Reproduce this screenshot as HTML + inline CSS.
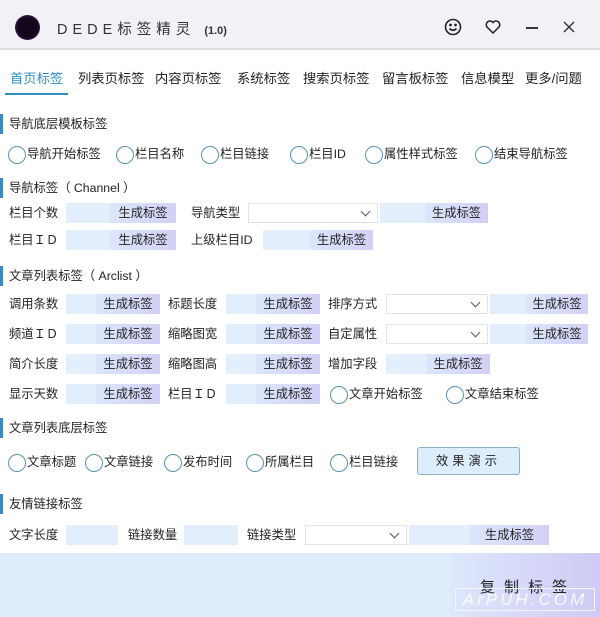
<!DOCTYPE html>
<html><head><meta charset="utf-8"><style>
*{margin:0;padding:0;box-sizing:border-box}
body{width:600px;height:617px;position:relative;background:#fff;overflow:hidden;font-family:"Liberation Sans","Noto Sans CJK SC",sans-serif;font-size:12.3px;color:#222}
.a{position:absolute;white-space:nowrap}
.t{height:20px;line-height:20px;transform:translateY(-10px)}
.box{position:absolute;height:20px;background:#e3effc;transform:translateY(-10px)}
.btn{position:absolute;top:0;right:0;height:20px;line-height:20px;text-align:center;background:linear-gradient(90deg,#dbe6fb,#d2d0f6);color:#222}
.sel{position:absolute;height:20px;background:#fff;border:1px solid #e2e2e8;transform:translateY(-10px)}
.sel:after{content:"";position:absolute;right:8px;top:4px;width:6px;height:6px;border-right:1.3px solid #555;border-bottom:1.3px solid #555;transform:rotate(45deg)}
.r{position:absolute;height:20px;line-height:20px;transform:translateY(-10px);padding-left:19px;white-space:nowrap}
.r:before{content:"";position:absolute;left:0;top:2px;width:16px;height:16px;border:1.6px solid #5a93ad;border-radius:50%}
.sec{position:absolute;left:0;width:3px;height:20px;background:#3c8ab8;transform:translateY(-10px)}
.tab{position:absolute;top:68px;font-size:13.3px;white-space:nowrap}
</style></head><body>
<div class="a" style="left:0;top:0;width:600px;height:50px;background:#f1f1f6;border-bottom:2px solid #dcdce2"></div>
<div class="a" style="left:15px;top:15px;width:25px;height:25px;border-radius:50%;background:radial-gradient(circle,#12081c 55%,#3a1a4c 75%,#c8a8e0 100%)"></div>
<div class="a" style="left:57px;top:18px;font-size:14.5px;letter-spacing:5px;color:#333">DEDE标签精灵 <span style="font-size:11px;letter-spacing:0;font-weight:bold">(1.0)</span></div>
<svg class="a" style="left:444px;top:18px" width="18" height="18" viewBox="0 0 18 18" fill="none" stroke="#222" stroke-width="1.6"><circle cx="9" cy="9" r="7.5"/><circle cx="6.5" cy="7" r=".6" fill="#222"/><circle cx="11.5" cy="7" r=".6" fill="#222"/><path d="M5.5 10.5q3.5 3.5 7 0"/></svg>
<svg class="a" style="left:485px;top:20px" width="16" height="14" viewBox="0 0 16 14" fill="none" stroke="#222" stroke-width="1.5"><path d="M8 13L2 7A3.3 3.3 0 0 1 8 2.5A3.3 3.3 0 0 1 14 7Z"/></svg>
<div class="a" style="left:526px;top:27px;width:12px;height:1.5px;background:#333"></div>
<svg class="a" style="left:563px;top:21px" width="12" height="12" viewBox="0 0 12 12" stroke="#333" stroke-width="1.4"><path d="M1 1L11 11M11 1L1 11"/></svg>

<div class="tab" style="left:10px;color:#2d8ec9">首页标签</div>
<div class="a" style="left:5px;top:93px;width:63px;height:2px;background:#2d8ec9"></div>
<div class="tab" style="left:78px">列表页标签</div>
<div class="tab" style="left:155px">内容页标签</div>
<div class="tab" style="left:237px">系统标签</div>
<div class="tab" style="left:303px">搜索页标签</div>
<div class="tab" style="left:382px">留言板标签</div>
<div class="tab" style="left:461px">信息模型</div>
<div class="tab" style="left:525px">更多/问题</div>

<div class="sec" style="top:124px"></div><div class="a t" style="left:9px;top:124px">导航底层模板标签</div>
<div class="r" style="left:8px;top:154px">导航开始标签</div>
<div class="r" style="left:116px;top:154px">栏目名称</div>
<div class="r" style="left:201px;top:154px">栏目链接</div>
<div class="r" style="left:290px;top:154px">栏目ID</div>
<div class="r" style="left:365px;top:154px">属性样式标签</div>
<div class="r" style="left:475px;top:154px">结束导航标签</div>

<div class="sec" style="top:188px"></div><div class="a t" style="left:9px;top:188px">导航标签（ Channel ）</div>
<div class="a t" style="left:9px;top:213px">栏目个数</div>
<div class="box" style="left:66px;top:213px;width:110px"><div class="btn" style="width:66px">生成标签</div></div>
<div class="a t" style="left:191px;top:213px">导航类型</div>
<div class="sel" style="left:248px;top:213px;width:130px"></div>
<div class="box" style="left:380px;top:213px;width:108px"><div class="btn" style="width:63px">生成标签</div></div>
<div class="a t" style="left:9px;top:240px">栏目ＩＤ</div>
<div class="box" style="left:66px;top:240px;width:110px"><div class="btn" style="width:66px">生成标签</div></div>
<div class="a t" style="left:191px;top:240px">上级栏目ID</div>
<div class="box" style="left:263px;top:240px;width:110px"><div class="btn" style="width:63px">生成标签</div></div>

<div class="sec" style="top:276px"></div><div class="a t" style="left:9px;top:276px">文章列表标签（ Arclist ）</div>

<div class="a t" style="left:9px;top:304px">调用条数</div>
<div class="box" style="left:66px;top:304px;width:94px"><div class="btn" style="width:64px">生成标签</div></div>
<div class="a t" style="left:168px;top:304px">标题长度</div>
<div class="box" style="left:226px;top:304px;width:94px"><div class="btn" style="width:64px">生成标签</div></div>
<div class="a t" style="left:328px;top:304px">排序方式</div>
<div class="sel" style="left:386px;top:304px;width:102px"></div>
<div class="box" style="left:490px;top:304px;width:98px"><div class="btn" style="width:62px">生成标签</div></div>

<div class="a t" style="left:9px;top:334px">频道ＩＤ</div>
<div class="box" style="left:66px;top:334px;width:94px"><div class="btn" style="width:64px">生成标签</div></div>
<div class="a t" style="left:168px;top:334px">缩略图宽</div>
<div class="box" style="left:226px;top:334px;width:94px"><div class="btn" style="width:64px">生成标签</div></div>
<div class="a t" style="left:328px;top:334px">自定属性</div>
<div class="sel" style="left:386px;top:334px;width:102px"></div>
<div class="box" style="left:490px;top:334px;width:98px"><div class="btn" style="width:62px">生成标签</div></div>

<div class="a t" style="left:9px;top:364px">简介长度</div>
<div class="box" style="left:66px;top:364px;width:94px"><div class="btn" style="width:64px">生成标签</div></div>
<div class="a t" style="left:168px;top:364px">缩略图高</div>
<div class="box" style="left:226px;top:364px;width:94px"><div class="btn" style="width:64px">生成标签</div></div>
<div class="a t" style="left:328px;top:364px">增加字段</div>
<div class="box" style="left:386px;top:364px;width:104px"><div class="btn" style="width:64px">生成标签</div></div>

<div class="a t" style="left:9px;top:394px">显示天数</div>
<div class="box" style="left:66px;top:394px;width:94px"><div class="btn" style="width:64px">生成标签</div></div>
<div class="a t" style="left:168px;top:394px">栏目ＩＤ</div>
<div class="box" style="left:226px;top:394px;width:94px"><div class="btn" style="width:64px">生成标签</div></div>
<div class="r" style="left:330px;top:394px">文章开始标签</div>
<div class="r" style="left:446px;top:394px">文章结束标签</div>

<div class="sec" style="top:428px"></div><div class="a t" style="left:9px;top:428px">文章列表底层标签</div>
<div class="r" style="left:8px;top:462px">文章标题</div>
<div class="r" style="left:85px;top:462px">文章链接</div>
<div class="r" style="left:164px;top:462px">发布时间</div>
<div class="r" style="left:246px;top:462px">所属栏目</div>
<div class="r" style="left:330px;top:462px">栏目链接</div>
<div class="a" style="left:417px;top:447px;width:103px;height:28px;line-height:26px;text-align:center;background:#dceefc;border:1px solid #8ab0cc;border-radius:3px;letter-spacing:4px">效果演示</div>

<div class="sec" style="top:504px"></div><div class="a t" style="left:9px;top:504px">友情链接标签</div>
<div class="a t" style="left:9px;top:535px">文字长度</div>
<div class="box" style="left:66px;top:535px;width:52px"></div>
<div class="a t" style="left:128px;top:535px">链接数量</div>
<div class="box" style="left:184px;top:535px;width:54px"></div>
<div class="a t" style="left:247px;top:535px">链接类型</div>
<div class="sel" style="left:305px;top:535px;width:102px"></div>
<div class="box" style="left:409px;top:535px;width:140px"><div class="btn" style="width:79px">生成标签</div></div>

<div class="a" style="left:0;top:553px;width:600px;height:64px;background:#dfeefc"></div>
<div class="a" style="left:450px;top:553px;width:150px;height:64px;background:linear-gradient(90deg,#dde8fb,#cfcaf5)"></div>
<div class="a" style="left:480px;top:576px;font-size:15px;letter-spacing:9px;color:#222">复制标签</div>
<div class="a" style="left:455px;top:588px;width:140px;height:23px;border:1px solid #f4f4ff;color:rgba(255,255,255,.85);font-size:17px;letter-spacing:3px;text-align:center;line-height:21px;font-style:italic">ArPUH.COM</div>
</body></html>
